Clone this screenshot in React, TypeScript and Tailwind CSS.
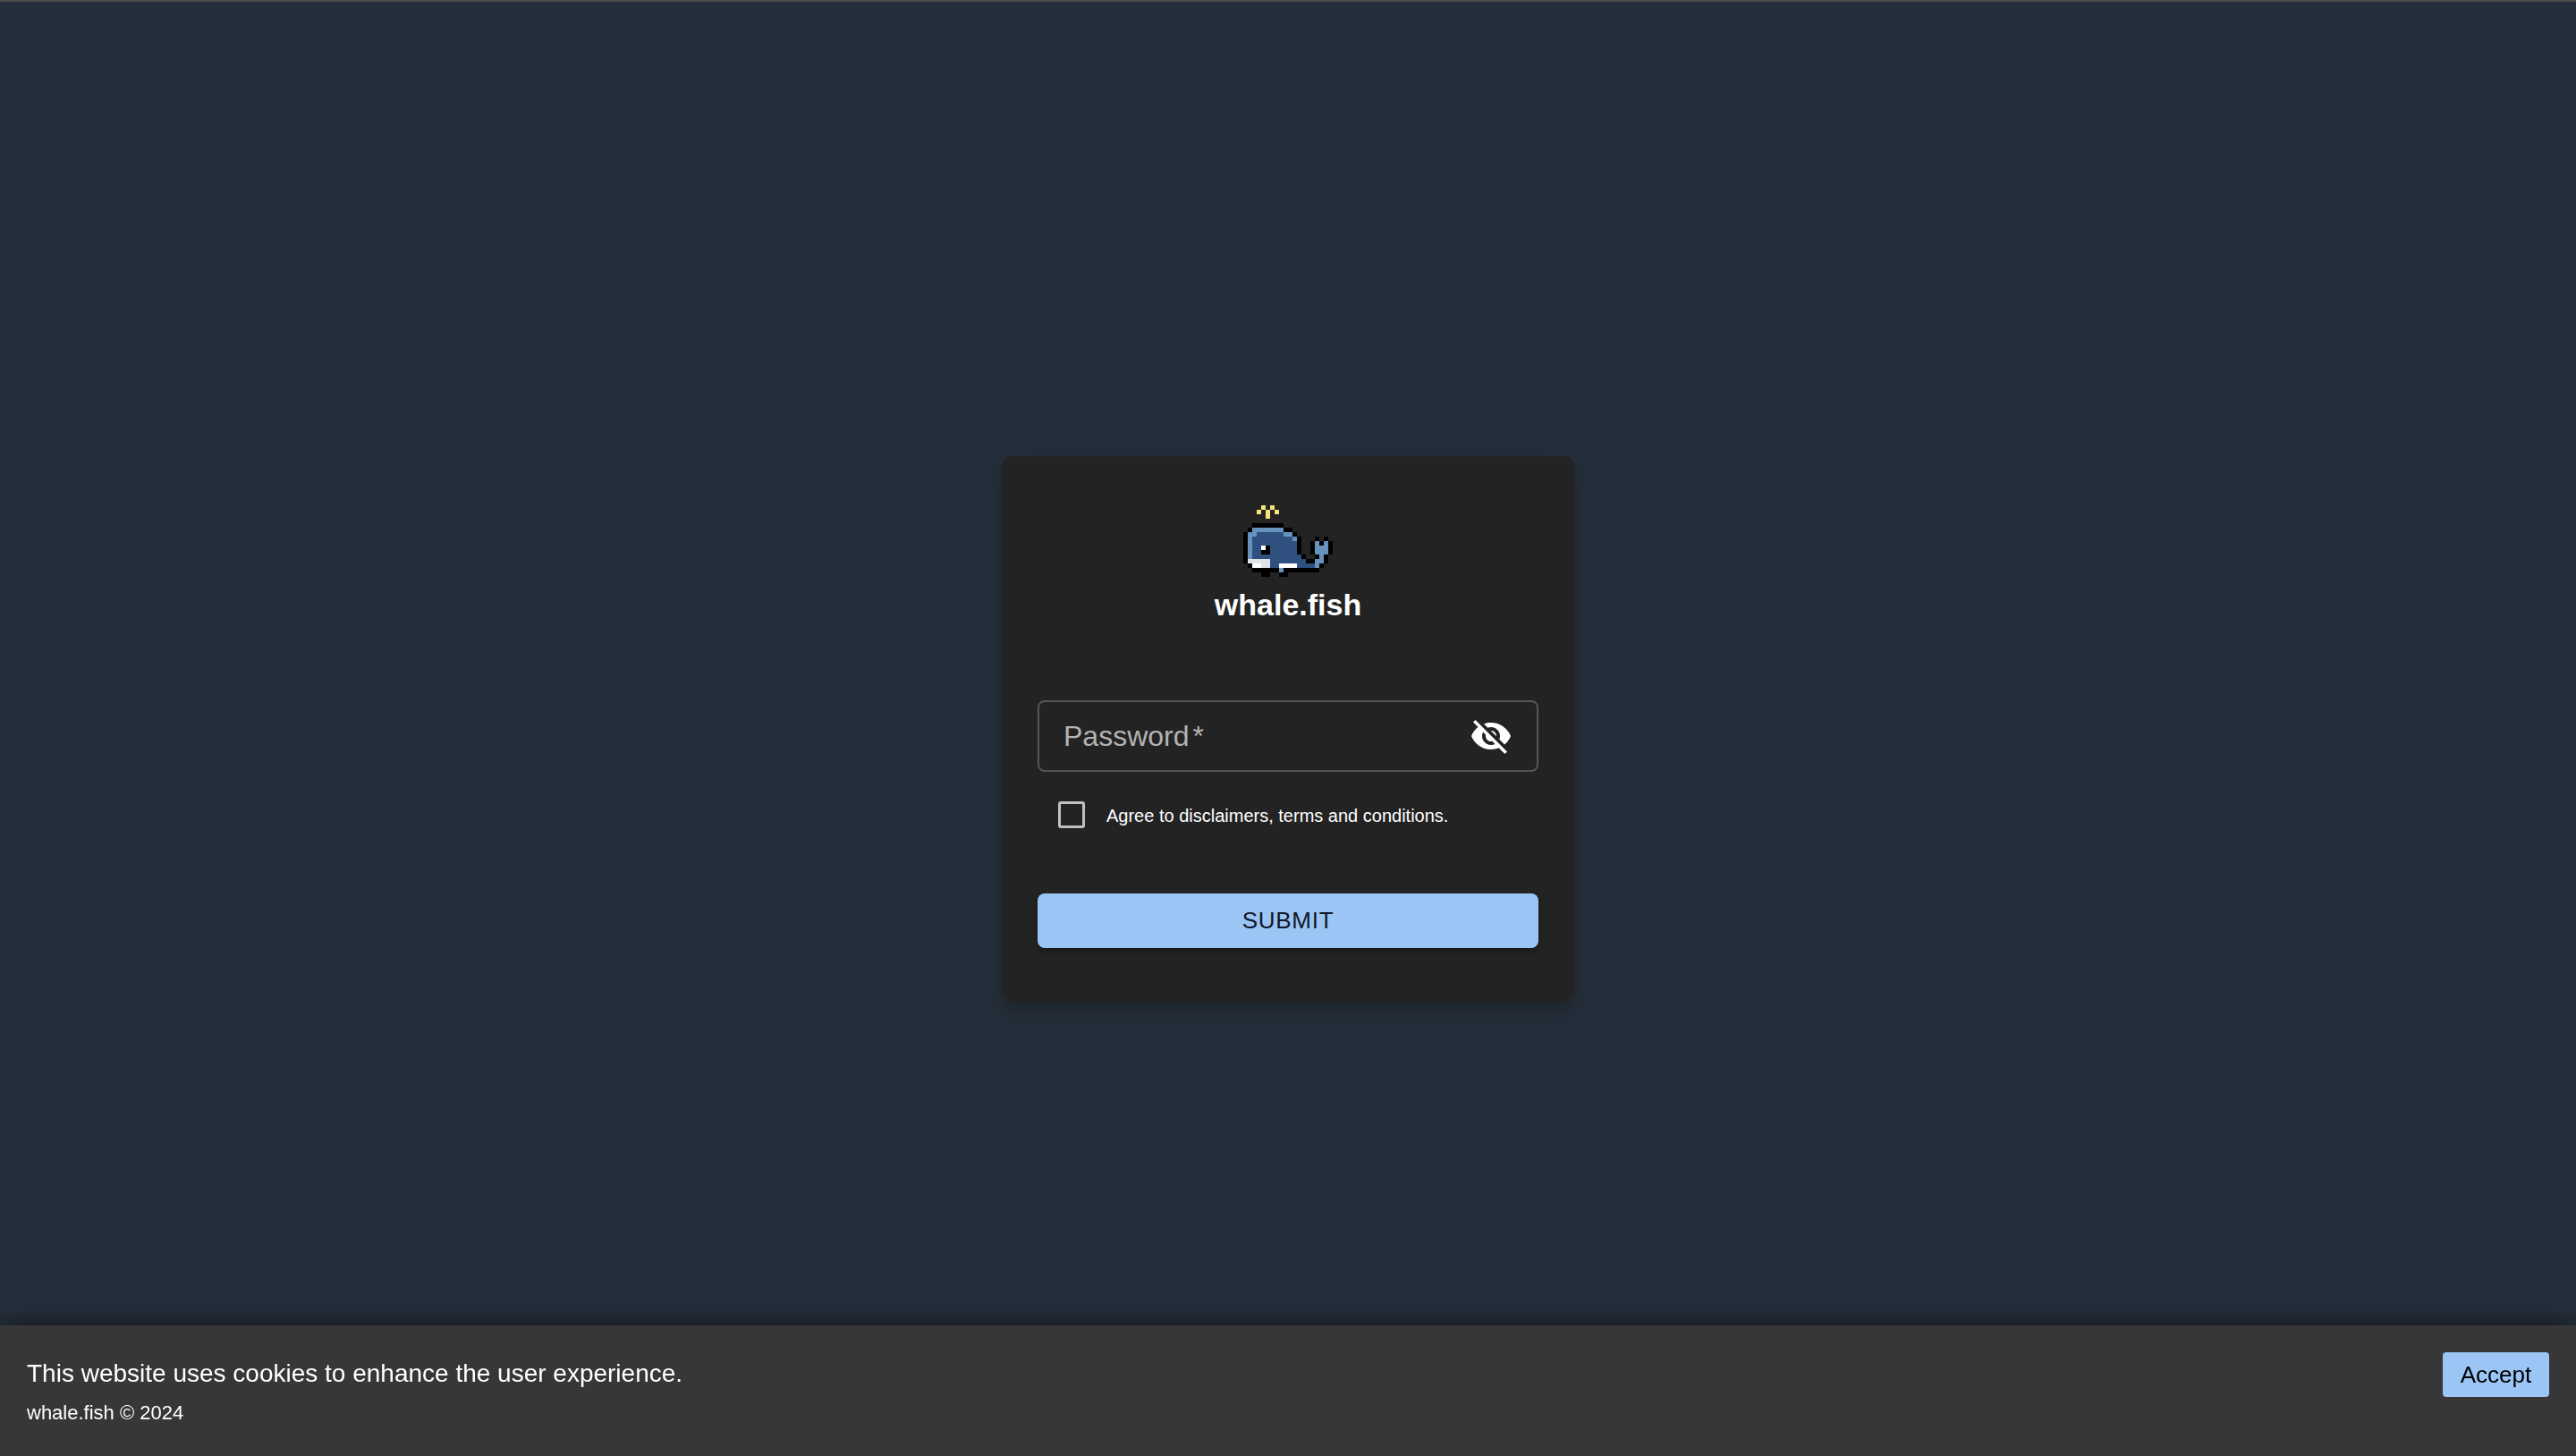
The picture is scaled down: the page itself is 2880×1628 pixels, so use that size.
const WHALE = [
  "....y.y.............",
  "...y.y.y............",
  ".....y..............",
  "....................",
  "..kkkkkkk...........",
  ".klllllllkk.........",
  "klldddddd" + "llk........",
  "kldddddddddlk...k.k.",
  "kldddddddddd" + "k..klklk",
  "klddwkddddddk..klllk",
  "klddkkddddddk..klllk",
  "kldddddddddddk..klk.",
  "kgggggddddddddkkllk.",
  ".kwwggddwwwwddddlk..",
  "..kkkkkklkkkkkkkk...",
  "....kk..kk..........",
];

const COLORS: Record<string, string> = {
  y: "#f6e27a",
  k: "#000000",
  l: "#6792bc",
  d: "#30507f",
  w: "#ffffff",
  g: "#dfe3e8",
};

function Whale() {
  return (
    <svg width="100" height="80" viewBox="0 0 20 16" shapeRendering="crispEdges" className="block">
      {WHALE.flatMap((row, y) =>
        row.split("").map((c, x) =>
          c === "." ? null : <rect key={`${x}-${y}`} x={x} y={y} width="1" height="1" fill={COLORS[c]} />
        )
      )}
    </svg>
  );
}

function EyeOff() {
  return (
    <svg width="48" height="48" viewBox="0 0 24 24" fill="#ffffff" className="block">
      <path d="M12 7c2.76 0 5 2.24 5 5 0 .65-.13 1.26-.36 1.83l2.92 2.92c1.51-1.26 2.7-2.89 3.43-4.75-1.73-4.39-6-7.5-11-7.5-1.4 0-2.74.25-3.98.7l2.16 2.16C10.74 7.13 11.35 7 12 7zM2 4.27l2.28 2.28.46.46C3.08 8.3 1.78 10.02 1 12c1.73 4.39 6 7.5 11 7.5 1.55 0 3.03-.3 4.38-.84l.42.42L19.73 22 21 20.73 3.27 3 2 4.27zM7.53 9.8l1.55 1.55c-.05.21-.08.43-.08.65 0 1.66 1.34 3 3 3 .22 0 .44-.03.65-.08l1.55 1.55c-.67.33-1.41.53-2.2.53-2.76 0-5-2.24-5-5 0-.79.2-1.53.53-2.2zm4.31-.78l3.15 3.15.02-.16c0-1.66-1.34-3-3-3l-.17.01z" />
    </svg>
  );
}

export default function App() {
  return (
    <div className="h-[1628px] w-full overflow-hidden bg-[#252f3b] font-['Liberation_Sans',Arial,sans-serif] text-white">
      <div className="h-[2px] bg-[#4a4a4a]" />
      <main className="flex h-[1626px] items-center justify-center">
        <div className="flex h-[610px] w-[640px] flex-col rounded-xl bg-[#232323] px-10 pt-[55px] shadow-[0_10px_28px_rgba(0,0,0,0.28)]">
          <div className="flex flex-col items-center">
            <Whale />
            <h1 className="mt-[11px] text-[34px] leading-10 font-bold">whale.fish</h1>
          </div>
          <div className="mt-[87px] flex h-20 items-center justify-between rounded-lg border-2 border-[#555555] pr-[27px] pl-[27px]">
            <span className="text-[32px] leading-10 text-[#b3b3b3]">
              Password<span className="ml-[4px]">*</span>
            </span>
            <EyeOff />
          </div>
          <label className="mt-[33px] flex h-[30px] items-center gap-6 pl-[23px]">
            <span className="h-[30px] w-[30px] rounded-[3px] border-[3px] border-[#c0c0c0]" />
            <span className="pt-[1px] text-[20px] leading-[30px]">Agree to disclaimers, terms and conditions.</span>
          </label>
          <button className="mt-[73px] h-[61px] w-full rounded-lg bg-[#9ac5f5] text-[26px] tracking-[0.74px] text-[#111827] shadow-[0_3px_6px_rgba(0,0,0,0.35)]">
            SUBMIT
          </button>
        </div>
      </main>
      <footer className="fixed right-0 bottom-0 left-0 flex h-[146px] items-start justify-between bg-[#373737] px-[30px] shadow-[0_-6px_20px_rgba(0,0,0,0.4)]">
        <div className="pt-[32px]">
          <p className="text-[28px] leading-[44px]">This website uses cookies to enhance the user experience.</p>
          <p className="mt-[7px] text-[22px] leading-[30px]">whale.fish © 2024</p>
        </div>
        <button className="mt-[30px] h-[50px] w-[119px] rounded-[4px] bg-[#9ac5f5] text-[26px] text-black">
          Accept
        </button>
      </footer>
    </div>
  );
}
